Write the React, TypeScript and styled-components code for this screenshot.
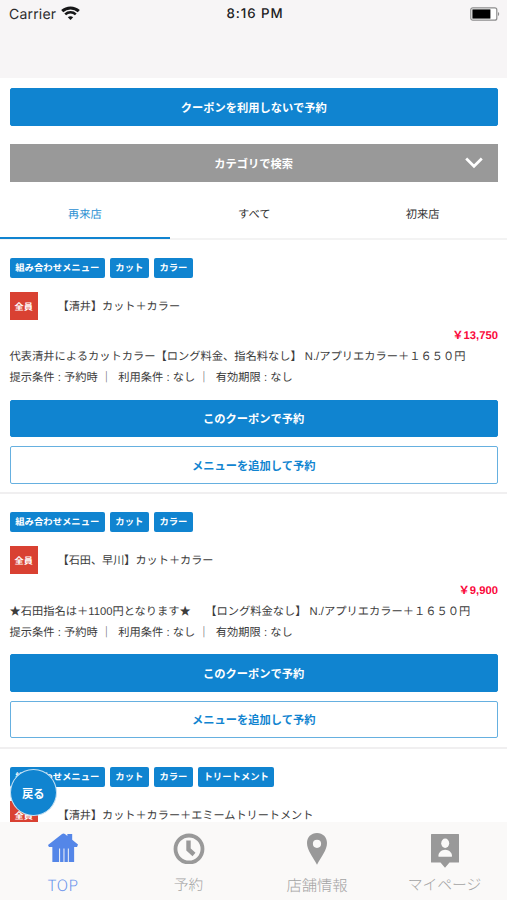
import React from "react";
import styled, { createGlobalStyle, css } from "styled-components";

const BLUE = "#1084d0";

const GlobalStyle = createGlobalStyle`
  * { box-sizing: border-box; }
  body {
    margin: 0;
    background: #fff;
    color: #3c3c3c;
    font-family: "Liberation Sans", "Noto Sans CJK JP", sans-serif;
    font-size: 11.25px;
    overflow: hidden;
    text-rendering: geometricPrecision;
  }
`;

const Screen = styled.div`
  display: flex;
  flex-direction: column;
  width: 507px;
  height: 900px;
  background: #fff;
  overflow: hidden;
`;

const Header = styled.header`
  flex: none;
  height: 78px;
  background: #f7f5f6;
`;

const StatusBar = styled.div`
  display: grid;
  grid-template-columns: 1fr auto 1fr;
  align-items: center;
  height: 28px;
  padding: 0 7px 0 9px;
  font-family: Inter, "Liberation Sans", sans-serif;
  font-size: 14px;
  color: #2b2b2d;
`;

const Carrier = styled.div`
  display: flex;
  align-items: center;
  gap: 5px;
  letter-spacing: 0.2px;

  svg { margin-bottom: 3px; }
`;

const Clock = styled.div`
  font-size: 13.3px;
  font-weight: 500;
  letter-spacing: 0.95px;
  margin-right: -1px;
  color: #202022;
`;

const BatterySlot = styled.div`
  display: flex;
  justify-content: flex-end;
  margin-bottom: 1px;
`;

const Content = styled.main`
  flex: none;
  height: 744px;
  overflow: hidden;
`;

const Actions = styled.div`
  display: flex;
  flex-direction: column;
  gap: 18.5px;
  padding: 10px 9px 0 9.5px;
`;

const Button = styled.button<{ $outline?: boolean }>`
  display: flex;
  align-items: center;
  justify-content: center;
  width: 100%;
  height: 37.5px;
  padding: 0;
  border: 1px solid ${BLUE};
  border-radius: 2px;
  background: ${BLUE};
  color: #fff;
  font: inherit;
  font-weight: 700;
  ${(p) =>
    p.$outline &&
    css`
      border-color: #66b0e0;
      background: #fff;
      color: ${BLUE};
    `}
`;

const CategoryButton = styled.button`
  display: grid;
  grid-template-columns: 1fr auto 1fr;
  align-items: center;
  width: 100%;
  height: 38px;
  padding: 0 15px;
  border: 0;
  background: #999;
  color: #fff;
  font: inherit;
  font-weight: 700;

  span { grid-column: 2; }
  svg { justify-self: end; }
`;

const Tabs = styled.nav`
  display: grid;
  grid-template-columns: 170px 1fr 1fr;
  height: 57.5px;
  border-bottom: 2px solid #f3f3f3;
`;

const Tab = styled.div<{ $active?: boolean }>`
  display: flex;
  align-items: center;
  justify-content: center;
  height: 56.5px;
  padding-top: 10px;
  border-bottom: 2px solid ${(p) => (p.$active ? BLUE : "transparent")};
  color: ${(p) => (p.$active ? "#2a8fd2" : "#333")};
`;

const Coupon = styled.article`
  height: 254.5px;
  padding: 18px 9px 0 9.5px;
  border-bottom: 2px solid #f0eff0;
`;

const Tags = styled.div`
  display: flex;
  gap: 5px;
`;

const Tag = styled.span`
  height: 20px;
  padding: 0 5.25px 0 5.75px;
  border-radius: 2px;
  background: ${BLUE};
  color: #fff;
  font-size: 9.35px;
  font-weight: 700;
  line-height: 20px;
  white-space: nowrap;
`;

const TitleRow = styled.div`
  display: flex;
  align-items: center;
  height: 28px;
  margin-top: 14px;
`;

const Audience = styled.span`
  display: flex;
  align-items: center;
  justify-content: center;
  width: 28.5px;
  height: 28px;
  background: #d94132;
  color: #fff;
  font-size: 9.2px;
  font-weight: 700;
`;

const Title = styled.h2`
  margin: 0 0 0 19.5px;
  font-size: 11.15px;
  font-weight: 400;
`;

const Price = styled.div`
  height: 20px;
  margin-top: 6.5px;
  color: #fa0a3c;
  font-weight: 700;
  line-height: 20px;
  text-align: right;
`;

const Line = styled.p`
  height: 21px;
  margin: 0;
  line-height: 22px;
  white-space: pre;
`;

const CouponButtons = styled.div`
  display: flex;
  flex-direction: column;
  gap: 9px;
  margin-top: 11.5px;
`;

const BottomNav = styled.nav`
  display: grid;
  flex: none;
  grid-template-columns: 126px 125px 132px 123px;
  height: 78px;
  background: #faf9f8;
`;

const NavItem = styled.div<{ $active?: boolean; $size?: number; $spacing?: number }>`
  display: flex;
  flex-direction: column;
  align-items: center;
  padding-top: 10px;
  color: ${(p) => (p.$active ? "#5486e8" : "#999")};
  font-family: "Noto Sans CJK JP", sans-serif;
  font-size: ${(p) => p.$size ?? 15}px;
  font-weight: 300;

  span {
    height: 22px;
    line-height: 22px;
    white-space: nowrap;
    letter-spacing: ${(p) => p.$spacing ?? 0}px;
    color: ${(p) => (p.$active ? "#6993ec" : "#a3a3a3")};
  }
`;

const NavIcon = styled.div<{ $shift?: number }>`
  height: 42px;
  padding-left: ${(p) => p.$shift ?? 0}px;
`;

const BackButton = styled.button`
  position: absolute;
  top: 769px;
  left: 10px;
  width: 46.5px;
  height: 47px;
  padding: 0;
  border: 1px solid #c4e0f3;
  border-radius: 50%;
  background: ${BLUE};
  color: #fff;
  font: inherit;
  font-weight: 700;
`;

const WifiIcon = () => (
  <svg width="19" height="14" viewBox="0 0 19 14" fill="none" stroke="#161617">
    <path d="M1.2 5.2C5.9.8 13.1.8 17.8 5.2" strokeWidth="3" />
    <path d="M4.2 8.4c3-2.8 7.6-2.8 10.6 0" strokeWidth="2.6" />
    <path d="M9.5 14 6.8 11.300c1.500-1.500 3.900-1.500 5.400 0Z" fill="#161617" stroke="none" />
  </svg>
);

const BatteryIcon = () => (
  <svg width="30" height="14" viewBox="0 0 30 14">
    <rect x=".8" y=".8" width="26" height="12.4" rx="2" fill="#fff" stroke="#8c8c8c" strokeWidth="1.2" />
    <rect x="2.4" y="2.4" width="18" height="9.2" fill="#000" />
    <path d="M28 5v4c1.6-.6 1.6-3.4 0-4Z" fill="#8c8c8c" />
  </svg>
);

const ChevronIcon = () => (
  <svg width="18" height="12" viewBox="0 0 18 12" fill="none" stroke="#fff" strokeWidth="2.7">
    <path d="m1.200 1.500 7.800 7.800 7.800-7.800" />
  </svg>
);

const HouseIcon = () => (
  <svg width="30" height="31" viewBox="0 0 31 32" fill="currentColor">
    <path d="M0 13.5 14.500 2Q16 1 17.500 2L20 4V2h5v6l6 5-1 2.500h-3v15.500h-5.500V17h-1v14h-3.500V17h-1v14h-3.500V17h-1v14H4.500V15.500H1Z" />
  </svg>
);

const ClockIcon = () => (
  <svg width="32" height="32" viewBox="0 0 32 32" fill="none" stroke="currentColor">
    <circle cx="16" cy="17" r="13.500" strokeWidth="3.800" />
    <path d="M15.500 8.500v9l5.500 5" strokeWidth="4.400" />
  </svg>
);

const PinIcon = () => (
  <svg width="22" height="33" viewBox="0 0 22 33" fill="currentColor">
    <path
      fillRule="evenodd"
      d="M11 1C5.200 1 1 5.200 1 11c0 7.200 5.800 13.800 10 21.700 4.200-7.900 10-14.500 10-21.700C21 5.200 16.800 1 11 1Zm0 6.700a4.100 4.100 0 1 1 0 8.200 4.100 4.100 0 0 1 0-8.200Z"
    />
  </svg>
);

const PersonIcon = () => (
  <svg width="30" height="36" viewBox="0 0 30 36">
    <path d="M1.500 2h27q.500 0 .500 .500v27.500q0 .500-.500 .500h-9L15 35.800l-4.500-5.300h-9q-.500 0-.500-.500V2.500q0-.500.500-.500Z" fill="currentColor" />
    <ellipse cx="15.200" cy="11.200" rx="4" ry="4.700" fill="#faf9f8" />
    <path d="M8.500 24.800v-1.500c0-2.500 3-5.500 6.700-5.500s6.700 3 6.700 5.500v1.500Z" fill="#faf9f8" />
  </svg>
);

const conditions = "提示条件 : 予約時 ｜  利用条件 : なし ｜  有効期限 : なし";

const coupons = [
  {
    tags: ["組み合わせメニュー", "カット", "カラー"],
    title: "【清井】カット＋カラー",
    price: "￥13,750",
    description: "代表清井によるカットカラー【ロング料金、指名料なし】 N./アプリエカラー＋１６５０円",
  },
  {
    tags: ["組み合わせメニュー", "カット", "カラー"],
    title: "【石田、早川】カット＋カラー",
    price: "￥9,900",
    description: "★石田指名は＋1100円となります★　 【ロング料金なし】 N./アプリエカラー＋１６５０円",
  },
  {
    tags: ["組み合わせメニュー", "カット", "カラー", "トリートメント"],
    title: "【清井】カット＋カラー＋エミームトリートメント",
  },
];

export default function App() {
  return (
    <>
      <GlobalStyle />
      <Screen>
        <Header>
          <StatusBar>
            <Carrier>
              Carrier
              <WifiIcon />
            </Carrier>
            <Clock>8:16 PM</Clock>
            <BatterySlot>
              <BatteryIcon />
            </BatterySlot>
          </StatusBar>
        </Header>
        <Content>
          <Actions>
            <Button>クーポンを利用しないで予約</Button>
            <CategoryButton>
              <span>カテゴリで検索</span>
              <ChevronIcon />
            </CategoryButton>
          </Actions>
          <Tabs>
            <Tab $active>再来店</Tab>
            <Tab>すべて</Tab>
            <Tab>初来店</Tab>
          </Tabs>
          {coupons.map((coupon) => (
            <Coupon key={coupon.title}>
              <Tags>
                {coupon.tags.map((tag) => (
                  <Tag key={tag}>{tag}</Tag>
                ))}
              </Tags>
              <TitleRow>
                <Audience>全員</Audience>
                <Title>{coupon.title}</Title>
              </TitleRow>
              {coupon.price && (
                <>
                  <Price>{coupon.price}</Price>
                  <Line>{coupon.description}</Line>
                  <Line>{conditions}</Line>
                  <CouponButtons>
                    <Button>このクーポンで予約</Button>
                    <Button $outline>メニューを追加して予約</Button>
                  </CouponButtons>
                </>
              )}
            </Coupon>
          ))}
        </Content>
        <BottomNav>
          <NavItem $active $size={15.5} $spacing={0.6}>
            <NavIcon $shift={-1}>
              <HouseIcon />
            </NavIcon>
            <span>TOP</span>
          </NavItem>
          <NavItem $size={14.7}>
            <NavIcon $shift={1}>
              <ClockIcon />
            </NavIcon>
            <span>予約</span>
          </NavItem>
          <NavItem $size={15.3}>
            <NavIcon>
              <PinIcon />
            </NavIcon>
            <span>店舗情報</span>
          </NavItem>
          <NavItem $size={14.8}>
            <NavIcon>
              <PersonIcon />
            </NavIcon>
            <span>マイページ</span>
          </NavItem>
        </BottomNav>
        <BackButton>戻る</BackButton>
      </Screen>
    </>
  );
}
